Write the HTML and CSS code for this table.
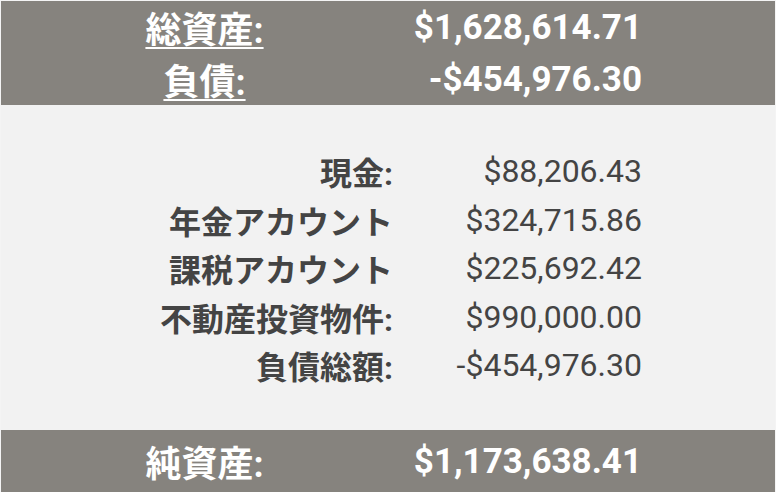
FILE: index.html
```html
<!DOCTYPE html>
<html lang="ja">
<head>
<meta charset="utf-8">
<link rel="stylesheet" href="styles.css">
</head>
<body>
<div class="sheet">
  <section class="band band-top">
    <div class="row"><span class="label u">総資産:</span><span class="value">$1,628,614.71</span></div>
    <div class="row"><span class="label u">負債:</span><span class="value">-$454,976.30</span></div>
  </section>
  <section class="detail">
    <div class="row"><span class="label">現金:</span><span class="value">$88,206.43</span></div>
    <div class="row"><span class="label">年金アカウント</span><span class="value">$324,715.86</span></div>
    <div class="row"><span class="label">課税アカウント</span><span class="value">$225,692.42</span></div>
    <div class="row"><span class="label">不動産投資物件:</span><span class="value">$990,000.00</span></div>
    <div class="row"><span class="label">負債総額:</span><span class="value">-$454,976.30</span></div>
  </section>
  <section class="band band-bottom">
    <div class="row"><span class="label">純資産:</span><span class="value">$1,173,638.41</span></div>
  </section>
</div>
</body>
</html>
```
FILE: styles.css
```css
html, body {
  margin: 0;
  padding: 0;
  background: #f2f2f2;
}
.sheet {
  width: 776px;
  height: 492px;
  box-sizing: border-box;
  padding: 1px 1px 0 1px;
  background: #f4f4f4;
  display: flex;
  flex-direction: column;
  font-family: Roboto, "Noto Sans CJK JP", sans-serif;
}
.row {
  display: grid;
  grid-template-columns: 389px 243px;
  padding-left: 9px;
  align-items: center;
}
.band {
  background: #86837e;
  color: #ffffff;
  font-weight: 700;
}
.band .label {
  text-align: center;
  font-size: 36px;
}
.band .value {
  text-align: right;
  font-size: 35px;
}
.u {
  text-decoration: underline;
  text-decoration-thickness: 2px;
  text-underline-offset: 4px;
}
.band-top {
  height: 104px;
  display: flex;
  flex-direction: column;
}
.band-top .row {
  height: 52px;
}
.detail {
  flex: 1;
  background: #f2f2f2;
  color: #444444;
  font-size: 32px;
  padding-top: 42px;
}
.detail .row {
  height: 48.5px;
}
.detail .label {
  text-align: right;
  font-weight: 700;
  padding-right: 6px;
}
.detail .value {
  text-align: right;
  font-weight: 400;
}
.band-bottom {
  height: 62px;
  display: flex;
  align-items: center;
}
.band-bottom .row {
  width: 100%;
}
```
